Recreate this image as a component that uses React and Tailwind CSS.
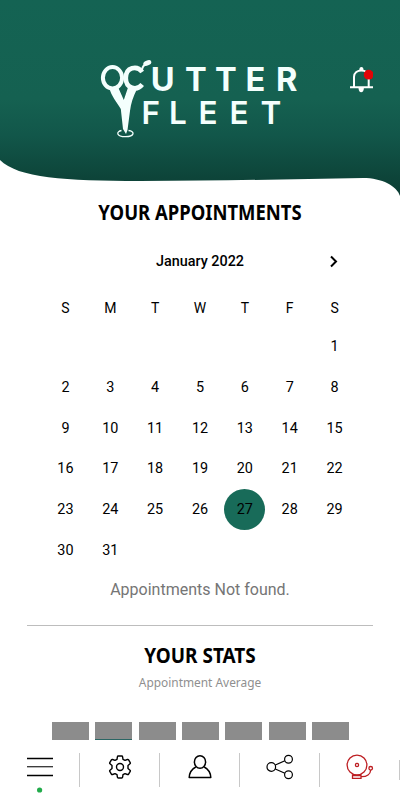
import React, { useState } from 'react';

const WEEKDAYS = ['S', 'M', 'T', 'W', 'T', 'F', 'S'];
const FIRST_WEEKDAY = 6;
const DAYS_IN_MONTH = 31;
const STAT_BARS = [0, 1, 0, 0, 0, 0, 0];

const Logo = () => (
    <svg
        viewBox="0 0 204 82"
        className="w-[204px] h-[82px]"
        fill="none"
        stroke="#f4fffd"
        fontFamily="Inter, sans-serif"
    >
        {/* Scissor handles */}
        <ellipse cx="12.5" cy="18.800" rx="9.6" ry="10.7" strokeWidth="4" />
        <path d="M42.2 13C37 6 25.800 8 25.800 19C25.800 30 37 32 42.2 25.500" strokeWidth="4.600" />
        <path d="M42 11C42.500 7 44 6 48 4" strokeWidth="2" />
        <ellipse cx="47.300" cy="4" rx="4.200" ry="2.500" transform="rotate(-22 47.300 4)" fill="#f4fffd" stroke="none" />
        {/* Blades */}
        <path d="M9.500 29L18 28L23.800 41L28 28.500L37 30C33 38 31 44 30 52L27.500 71L26 75L23 70L20.800 50C17 43 11 37 9.500 29Z" fill="#f4fffd" stroke="none" />
        <path d="M21.500 71.500C16 72.500 16 77.600 25.500 77.700C35 77.600 35 72 28.500 71.500" strokeWidth="1.300" />
        <g fill="#f4fffd" stroke="none" fontSize="32.600">
            <text x="50.800 85 115 145.500 176" y="31.800" fontWeight="700">UTTER</text>
            <text x="41.500 69 98.500 129.500 160.500" y="65" fontWeight="600" fontSize="31.500">FLEET</text>
        </g>
    </svg>
);

const Bell = () => (
    <svg viewBox="0 0 24 28" className="w-6 h-7" fill="none" stroke="white" strokeWidth="2">
        <path d="M1 22.300H24M5 22V12C5 3.200 19.700 3.200 19.700 12V22" />
        <path d="M10.300 5a2 2.800 0 0 1 4.200 0z" fill="white" stroke="none" />
        <path d="M9.500 23h5.400c0 5.600-5.400 5.600-5.400 0z" fill="white" stroke="none" />
        <circle cx="19.700" cy="9.700" r="4.900" fill="#e10407" stroke="none" />
    </svg>
);

const Header = () => (
    <header className="relative h-[198px] shrink-0">
        <svg viewBox="0 0 400 198" className="absolute inset-0 w-full h-full">
            <defs>
                <linearGradient id="headerFill" x1="0" y1="0" x2="0" y2="198" gradientUnits="userSpaceOnUse">
                    <stop offset="0" stopColor="#146353" />
                    <stop offset="0.500" stopColor="#156151" />
                    <stop offset="0.680" stopColor="#12574a" />
                    <stop offset="0.900" stopColor="#0d4439" />
                    <stop offset="1" stopColor="#0b3c33" />
                </linearGradient>
            </defs>
            <path d="M0 0H400V196C397 186 382 178 363 178C290 179 220 181 140 181C65 181 18 178 0 160Z" fill="url(#headerFill)" />
        </svg>
        <div className="relative flex items-start pt-[59px] pl-[100px]">
            <Logo />
            <button className="ml-[45px] mt-[6px]" aria-label="Notifications">
                <Bell />
            </button>
        </div>
    </header>
);

const Calendar = ({ selected, onSelect }) => {
    const days = Array.from({ length: DAYS_IN_MONTH }, (_, i) => i + 1);

    return (
        <section className="w-[314px] mx-auto text-black">
            <div className="relative h-[26px] flex items-center justify-center">
                <span className="text-[14.400px] font-medium">January 2022</span>
                <button className="absolute right-[17px]" aria-label="Next month">
                    <svg viewBox="0 0 12 14" className="w-3 h-[14px]" fill="none" stroke="black" strokeWidth="2">
                        <path d="M3 1.500l5 5-5 5" />
                    </svg>
                </button>
            </div>
            <div className="grid grid-cols-7 mt-[20px] h-[26px] items-center text-center text-[14px]">
                {WEEKDAYS.map((day, i) => (
                    <span key={i}>{day}</span>
                ))}
            </div>
            <div className="grid grid-cols-7 mt-[5px] auto-rows-[40.800px] items-center justify-items-center text-[14.400px]">
                {days.map(day => (
                    <button
                        key={day}
                        onClick={() => onSelect(day)}
                        style={day === 1 ? { gridColumnStart: FIRST_WEEKDAY + 1 } : undefined}
                        className={`size-[41px] pt-px rounded-full ${day === selected ? 'bg-[#186b59]' : ''}`}
                    >
                        {day}
                    </button>
                ))}
            </div>
        </section>
    );
};

const NavItem = ({ children, last }) => (
    <button className="relative w-20 h-full flex justify-center">
        {children}
        <span
            className={`absolute right-0 w-px bg-[#c8c8c8] ${last ? 'top-[20px] h-[20px]' : 'top-[13px] h-[34px]'}`}
        />
    </button>
);

const NavBar = () => (
    <nav className="flex h-[60px] shrink-0 bg-white">
        <NavItem>
            <svg viewBox="0 0 28 54" className="w-7 h-[54px]" fill="none" stroke="black" strokeWidth="1.300">
                <path d="M1 18.500h26M1 35.500h26" />
                <path d="M1 26.700h26" stroke="#333" />
                <circle cx="13.600" cy="50" r="2.600" fill="#22ab4b" stroke="none" />
            </svg>
        </NavItem>
        <NavItem>
            <svg viewBox="0 0 24 24" className="w-6 h-6 mt-[15px]" fill="none" stroke="black" strokeWidth="1.400" strokeLinejoin="round">
                <path d="M10.300 1h3.400q.8 0 .9.800l.4 2.500 2 1.100 2.400-.9q.8-.3 1.200.4l1.600 2.700q.4.700-.2 1.200L20 10.500v3l2 1.700q.6.500.2 1.200l-1.600 2.700q-.4.700-1.200.4l-2.400-.9-2 1.100-.4 2.500q-.1.800-.9.800h-3.400q-.8 0-.9-.8L9 19.700l-2-1.100-2.400.9q-.8.300-1.200-.4l-1.600-2.700q-.4-.7.200-1.200L4 13.500v-3L2 8.800q-.6-.5-.2-1.200l1.600-2.700q.4-.7 1.200-.4l2.400.9 2-1.100.4-2.500q.1-.8.900-.8z" />
                <circle cx="12" cy="12" r="3.500" />
            </svg>
        </NavItem>
        <NavItem>
            <svg viewBox="0 0 24 24" className="w-6 h-6 mt-[15px]" fill="none" stroke="black" strokeWidth="1.500" strokeLinejoin="round">
                <ellipse cx="12" cy="7" rx="5.600" ry="6.200" />
                <path d="M7.800 12C4 14 1.400 17 1.200 22.600H22.800C22.600 17 20 14 16.200 12" />
            </svg>
        </NavItem>
        <NavItem>
            <svg viewBox="0 0 28 26" className="w-7 h-[26px] mt-[14px]" fill="none" stroke="black" strokeWidth="1.200">
                <circle cx="5.300" cy="13" r="4.300" />
                <circle cx="22.500" cy="5.200" r="3.900" />
                <circle cx="22.500" cy="20.800" r="3.900" />
                <path d="M9.300 11l9.600-4.200M9.300 15l9.600 4.200" />
            </svg>
        </NavItem>
        <NavItem last>
            <svg viewBox="0 0 28 26" className="w-7 h-[26px] mt-[14px]" fill="none" stroke="#bd1e22" strokeWidth="1.300">
                <circle cx="11" cy="11" r="9.900" />
                <circle cx="11" cy="11" r="1.600" />
                <path d="M6.500 20.300v4h8.500v-4M6.500 21.500h8.500M15 22.700C21 23 24.500 20 24.700 16" />
                <circle cx="24.700" cy="14.300" r="1.800" />
            </svg>
        </NavItem>
    </nav>
);

export default function App() {
    const [selected, setSelected] = useState(27);

    return (
        <div className="w-[400px] h-[800px] flex flex-col overflow-hidden bg-white font-['Roboto',sans-serif]">
            <Header />
            <main className="flex-1 min-h-0 overflow-hidden flex flex-col">
                <h1 className="h-[30px] mb-[21px] text-center whitespace-nowrap font-['Noto_Sans',sans-serif] font-bold text-[20.500px] leading-[29px] text-black scale-x-[0.900]">
                    YOUR APPOINTMENTS
                </h1>
                <Calendar selected={selected} onSelect={setSelected} />
                <p className="mt-[7px] text-center text-base leading-6 text-[#757575]">
                    Appointments Not found.
                </p>
                <hr className="mx-[27px] mt-[23px] border-[#bdbdbd]" />
                <h2 className="h-[30px] mt-[14px] text-center whitespace-nowrap font-['Noto_Sans',sans-serif] font-bold text-[20.500px] leading-[30px] text-black scale-x-[0.925]">
                    YOUR STATS
                </h2>
                <p className="mt-[2px] text-center font-['Noto_Sans',sans-serif] text-[13px] leading-5 text-[#8f8f8f] scale-x-[0.915]">
                    Appointment Average
                </p>
                <div className="flex gap-[6.400px] mx-auto mt-[30px] pl-px">
                    {STAT_BARS.map((value, i) => (
                        <div
                            key={i}
                            className={`w-[37px] h-[18px] bg-[#8c8c8c] ${value ? 'border-b border-[#2b6664]' : ''}`}
                        />
                    ))}
                </div>
            </main>
            <NavBar />
        </div>
    );
}
